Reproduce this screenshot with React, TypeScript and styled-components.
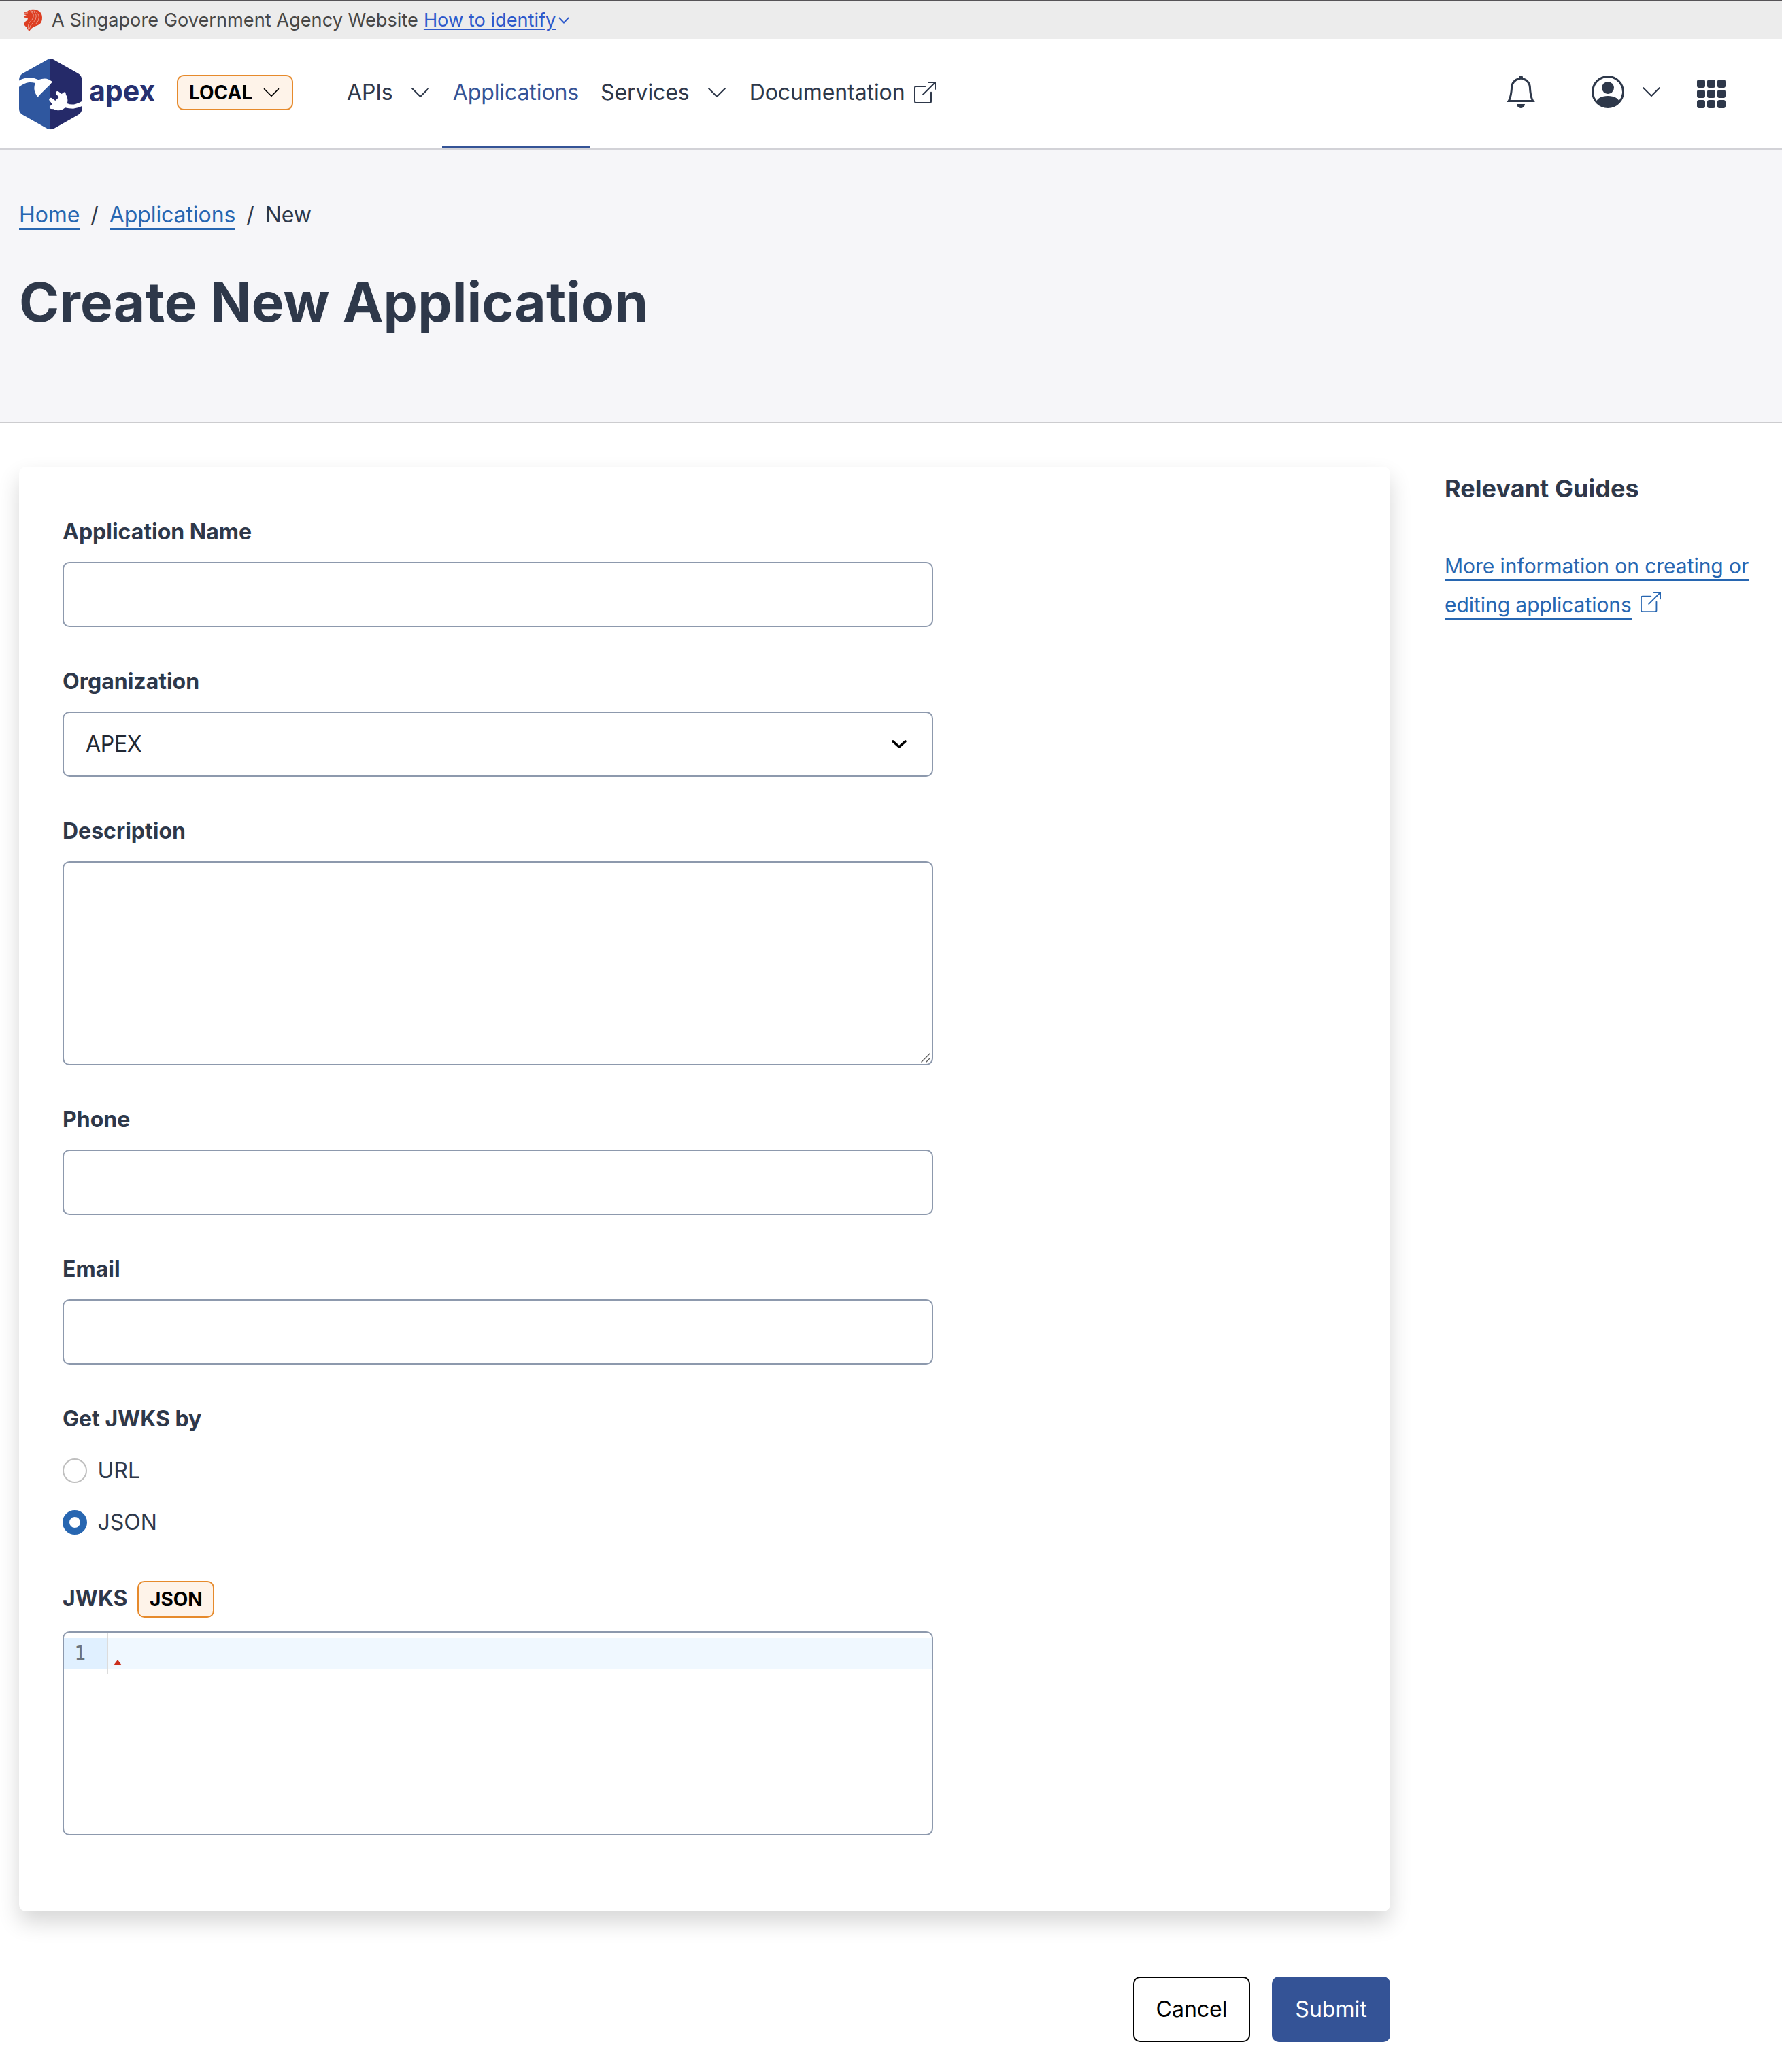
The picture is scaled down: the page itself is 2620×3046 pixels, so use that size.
import React from "react";
import styled, { createGlobalStyle, css } from "styled-components";
import {
  BsBell,
  BsBoxArrowUpRight,
  BsChevronDown,
  BsGrid3X3GapFill,
  BsPersonCircle,
} from "react-icons/bs";

const ink = "#2e384a";
const blue = "#345396";
const linkBlue = "#2766b1";
const line = "#8d99ad";

const GlobalStyle = createGlobalStyle`
  *, *::before, *::after { box-sizing: border-box; }
  body {
    margin: 0;
    background: #ffffff;
    color: ${ink};
    font-family: Inter, "Liberation Sans", sans-serif;
    font-size: 32px;
    line-height: 48px;
  }
  button, input, textarea { font: inherit; color: inherit; }
`;

const Page = styled.div`
  width: 2620px;
  height: 3046px;
  overflow: hidden;
  display: flex;
  flex-direction: column;
`;

/* ---------- masthead ---------- */

const Masthead = styled.div`
  height: 58px;
  flex: none;
  display: flex;
  align-items: center;
  padding-left: 34px;
  border-top: 2px solid #565457;
  background: #ececec;
  color: #474747;
  font-size: 27.2px;
  line-height: 40px;
  white-space: nowrap;
`;

const MastheadText = styled.span`
  margin-left: 12px;
`;

const MastheadLink = styled.a`
  margin-left: 8px;
  display: inline-flex;
  align-items: center;
  color: #2d59cb;
`;

const MastheadLinkText = styled.span`
  text-decoration: underline;
  text-decoration-thickness: 2px;
  text-underline-offset: 3px;
`;

const MastheadChevron = styled.svg`
  width: 18px;
  height: 12px;
  margin-left: 3px;
`;

/* ---------- header ---------- */

const Header = styled.header`
  height: 162px;
  flex: none;
  display: flex;
  align-items: stretch;
  padding: 0 80px 0 28px;
  border-bottom: 2px solid #d2d2d7;
  background: #ffffff;
`;

const Brand = styled.a`
  display: flex;
  align-items: center;
  width: 232px;
`;

const Tag = styled.span<{ $height: number }>`
  display: inline-flex;
  align-items: center;
  height: ${(p) => p.$height}px;
  padding: 0 16px;
  border: 2px solid #e68a2c;
  border-radius: 10px;
  background: #fef3e9;
  color: #000000;
  font-size: 28px;
  font-weight: 700;
  line-height: 42px;
`;

const EnvironmentTag = styled(Tag)`
  align-self: center;
  width: 171px;
  justify-content: space-between;
  margin-bottom: 4px;
`;

const Nav = styled.nav`
  display: flex;
  margin-left: 63px;
  letter-spacing: -0.09px;
`;

const NavItem = styled.a<{ $active?: boolean; $gap?: number }>`
  display: flex;
  align-items: center;
  gap: ${(p) => p.$gap ?? 24}px;
  padding: 0 16px;
  border-bottom: 4px solid transparent;
  color: ${ink};
  ${(p) =>
    p.$active &&
    css`
      color: ${blue};
      border-bottom-color: ${blue};
    `}
  svg {
    display: block;
    flex: none;
  }
`;

const Tools = styled.div`
  display: flex;
  align-items: center;
  margin-left: auto;
  padding-bottom: 6px;
`;

const Account = styled.div`
  display: flex;
  align-items: center;
  gap: 24px;
  margin: 0 48px 0 80px;
`;

const AppsButton = styled.div`
  display: flex;
  padding-top: 6px;
`;

/* ---------- hero ---------- */

const Hero = styled.section`
  height: 402px;
  flex: none;
  padding: 72px 28px 0;
  border-bottom: 2px solid #cccccf;
  background: #f6f6f9;
`;

const Breadcrumb = styled.nav`
  display: flex;
  align-items: center;
  letter-spacing: -0.09px;
`;

const Crumb = styled.span``;

const Slash = styled.span`
  width: 43.5px;
  text-align: center;
`;

const linkLine = css`
  color: ${linkBlue};
  border-bottom: 3px solid ${linkBlue};
`;

const CrumbLink = styled.a`
  ${linkLine}
`;

const Title = styled.h1`
  margin: 56px 0 0;
  font-size: 80px;
  font-weight: 700;
  line-height: 96px;
  letter-spacing: 0.13px;
`;

/* ---------- content ---------- */

const Content = styled.main`
  display: flex;
  align-items: flex-start;
  gap: 80px;
  padding: 64px 28px 0;
`;

const FormColumn = styled.form`
  width: 2016px;
`;

const Card = styled.div`
  display: flex;
  flex-direction: column;
  gap: 56px;
  padding: 72px 64px 112px;
  border-radius: 10px;
  background: #ffffff;
  box-shadow: 0 16px 32px rgba(0, 0, 0, 0.16);
`;

const Field = styled.div`
  display: flex;
  flex-direction: column;
  align-items: flex-start;
  gap: 20px;
`;

const Label = styled.label`
  font-weight: 700;
`;

const box = css`
  display: block;
  width: 1280px;
  margin: 0;
  border: 2px solid ${line};
  border-radius: 10px;
  background: #ffffff;
  outline: none;
`;

const Input = styled.input`
  ${box}
  height: 96px;
  padding: 0 32px;
`;

const Select = styled.div`
  ${box}
  height: 96px;
  display: flex;
  align-items: center;
  justify-content: space-between;
  padding: 0 36px 0 32px;
  color: #212833;
  letter-spacing: -0.3px;
`;

const TextArea = styled.div`
  ${box}
  height: 300px;
  display: flex;
  align-items: flex-end;
  justify-content: flex-end;
  padding: 2px;
`;

const RadioGroup = styled.div`
  display: flex;
  flex-direction: column;
  gap: 28px;
  padding: 8px 0 6px;
`;

const RadioRow = styled.label`
  display: flex;
  align-items: center;
  gap: 15.5px;
`;

const RadioDot = styled.span<{ $checked?: boolean }>`
  width: 36px;
  height: 36px;
  border-radius: 50%;
  background: #ffffff;
  border: ${(p) => (p.$checked ? `10px solid ${linkBlue}` : "2px solid #bfbfbf")};
`;

const TaggedLabel = styled.div`
  display: flex;
  align-items: baseline;
  gap: 14.5px;
`;

const FormatTag = styled(Tag)`
  width: 113px;
`;

const Editor = styled.div`
  ${box}
  height: 300px;
  overflow: hidden;
  font-family: "DejaVu Sans Mono", monospace;
  font-size: 28px;
  line-height: 45px;
`;

const EditorRow = styled.div`
  display: flex;
  height: 61px;
`;

const Gutter = styled.div`
  width: 65px;
  padding: 8px 0;
  border-right: 2px solid #dcdcdc;
`;

const LineNumber = styled.div`
  height: 45px;
  padding-right: 31px;
  background: #e0f0ff;
  color: #6a737d;
  text-align: right;
`;

const ActiveLine = styled.div`
  flex: 1;
  height: 45px;
  margin-top: 8px;
  padding: 32px 0 0 8px;
  background: #f0f8ff;
`;

const LintMark = styled.div`
  width: 0;
  height: 0;
  border: solid transparent;
  border-width: 0 6px 8px;
  border-bottom-color: #cb2f1c;
`;

const Actions = styled.div`
  display: flex;
  justify-content: flex-end;
  gap: 32px;
  margin-top: 96px;
`;

const Button = styled.button<{ $primary?: boolean }>`
  height: 96px;
  width: ${(p) => (p.$primary ? 174 : 172)}px;
  padding: 0;
  border: 2px solid ${(p) => (p.$primary ? blue : "#000000")};
  border-radius: 10px;
  background: ${(p) => (p.$primary ? blue : "#ffffff")};
  color: ${(p) => (p.$primary ? "#ffffff" : "#000000")};
`;

/* ---------- guides ---------- */

const Guides = styled.aside`
  width: 468px;
`;

const GuidesTitle = styled.h2`
  margin: 8px 0 0;
  font-size: 36px;
  font-weight: 700;
  line-height: 48px;
  letter-spacing: 0.05px;
`;

const GuideText = styled.p`
  margin: 62px 0 0;
  font-size: 30px;
  line-height: 57px;
  letter-spacing: -0.05px;
  white-space: nowrap;
`;

const GuideLink = styled.a`
  ${linkLine}
  padding-bottom: 1px;
`;

const GuideIcon = styled(BsBoxArrowUpRight)`
  margin-left: 13px;
  color: ${linkBlue};
`;

/* ---------- drawings ---------- */

const Lion = () => (
  <svg width="30" height="34" viewBox="102 40 90 102">
    <path
      fill="#dd3e22"
      d="M106 55 L119 52 Q130 41 147 42 Q166 43 176 53 Q186 64 186 78 Q186 96 177 106 Q168 114 152 118 Q138 124 129 139 Q119 131 118 120 Q110 117 108 112 Q105 103 111 97 L120 90 Q124 84 122 80 L108 78 L104 72 L117 68 L105 65 Z"
    />
    <g fill="none" stroke="#f3cfc8" strokeWidth="1.9" strokeLinecap="round">
      <path d="M121 54 Q142 49 147 64 Q151 80 134 96 Q119 110 126 133" />
      <path d="M134 48 Q158 52 160 72 Q160 90 144 103 Q133 112 130 127" />
      <path d="M150 49 Q171 58 172 77 Q172 93 160 105" />
      <path d="M106 59 L122 58" />
    </g>
  </svg>
);

const Logo = () => (
  <svg width="216" height="105" viewBox="84 257 648 315">
    <defs>
      <clipPath id="hex">
        <path d="M223 258 Q231 258 238 262 L345 323 Q361 333 361 351 V478 Q361 496 345 505 L238 566 Q231 570 223 570 Q215 570 208 566 L100 505 Q84 496 84 478 V351 Q84 333 100 323 L208 262 Q215 258 223 258 Z" />
      </clipPath>
    </defs>
    <g clipPath="url(#hex)">
      <rect x="84" y="258" width="139" height="313" fill="#2f579f" />
      <rect x="222" y="258" width="140" height="313" fill="#252a69" />
      <path
        fill="#ffffff"
        d="M80 357 Q104 342 130 342 Q152 342 170 351 Q190 343 206 346 Q217 349 231 359 Q227 366 218 375 L180 412 Q173 419 167 427 Q151 408 151 388 Q151 376 156 365 Q142 361 128 362 Q104 366 80 385 Z"
      />
      <path
        fill="#ffffff"
        d="M247 404 Q253 399 259 403 L272 413 L281 406 Q286 403 289 407 Q290 416 295 425 Q301 440 296 455 Q315 463 335 457 Q350 453 364 444 V466 Q345 477 323 478 Q302 478 287 474 Q273 487 255 486 Q243 485 236 480 L224 479 Q217 475 218 470 L230 458 L217 441 Q215 434 221 431 Q227 429 231 433 L244 443 L260 427 L247 413 Q244 408 247 404 Z"
      />
    </g>
    <text
      x="393"
      y="447"
      fontFamily="Inter, sans-serif"
      fontWeight="700"
      fontSize="134"
      textLength="292"
      lengthAdjust="spacingAndGlyphs"
      fill="#28306f"
    >
      apex
    </text>
  </svg>
);

const SelectChevron = () => (
  <svg width="24" height="16" viewBox="0 0 24 16">
    <path
      d="M3 4 L12 12 L21 4"
      fill="none"
      stroke="#000000"
      strokeWidth="3.6"
      strokeLinecap="round"
      strokeLinejoin="round"
    />
  </svg>
);

const ResizeGrip = () => (
  <svg width="14" height="14" viewBox="0 0 14 14">
    <path d="M0.5 13.5 L13.5 0.5 M7.5 13.5 L13.5 7.5" stroke="#5c5c5c" strokeWidth="1.4" />
  </svg>
);

export default function App() {
  return (
    <Page>
      <GlobalStyle />
      <Masthead>
        <Lion />
        <MastheadText>A Singapore Government Agency Website</MastheadText>
        <MastheadLink>
          <MastheadLinkText>How to identify</MastheadLinkText>
          <MastheadChevron viewBox="0 0 18 12">
            <path d="M2 2 L9 9.5 L16 2" fill="none" stroke="currentColor" strokeWidth="2" />
          </MastheadChevron>
        </MastheadLink>
      </Masthead>

      <Header>
        <Brand>
          <Logo />
        </Brand>
        <EnvironmentTag $height={52}>
          <span>LOCAL</span>
          <BsChevronDown size={28} />
        </EnvironmentTag>
        <Nav>
          <NavItem>
            <span>APIs</span>
            <BsChevronDown size={32} />
          </NavItem>
          <NavItem $active>
            <span>Applications</span>
          </NavItem>
          <NavItem>
            <span>Services</span>
            <BsChevronDown size={32} />
          </NavItem>
          <NavItem $gap={13}>
            <span>Documentation</span>
            <BsBoxArrowUpRight size={32} />
          </NavItem>
        </Nav>
        <Tools>
          <BsBell size={48} color={ink} />
          <Account>
            <BsPersonCircle size={48} color={ink} />
            <BsChevronDown size={32} color={ink} />
          </Account>
          <AppsButton>
            <BsGrid3X3GapFill size={48} color={ink} />
          </AppsButton>
        </Tools>
      </Header>

      <Hero>
        <Breadcrumb>
          <Crumb>
            <CrumbLink>Home</CrumbLink>
          </Crumb>
          <Slash>/</Slash>
          <Crumb>
            <CrumbLink>Applications</CrumbLink>
          </Crumb>
          <Slash>/</Slash>
          <Crumb>New</Crumb>
        </Breadcrumb>
        <Title>Create New Application</Title>
      </Hero>

      <Content>
        <FormColumn>
          <Card>
            <Field>
              <Label>Application Name</Label>
              <Input />
            </Field>
            <Field>
              <Label>Organization</Label>
              <Select>
                <span>APEX</span>
                <SelectChevron />
              </Select>
            </Field>
            <Field>
              <Label>Description</Label>
              <TextArea>
                <ResizeGrip />
              </TextArea>
            </Field>
            <Field>
              <Label>Phone</Label>
              <Input />
            </Field>
            <Field>
              <Label>Email</Label>
              <Input />
            </Field>
            <Field>
              <Label>Get JWKS by</Label>
              <RadioGroup>
                <RadioRow>
                  <RadioDot />
                  <span>URL</span>
                </RadioRow>
                <RadioRow>
                  <RadioDot $checked />
                  <span>JSON</span>
                </RadioRow>
              </RadioGroup>
            </Field>
            <Field>
              <TaggedLabel>
                <Label>JWKS</Label>
                <FormatTag $height={54}>JSON</FormatTag>
              </TaggedLabel>
              <Editor>
                <EditorRow>
                  <Gutter>
                    <LineNumber>1</LineNumber>
                  </Gutter>
                  <ActiveLine>
                    <LintMark />
                  </ActiveLine>
                </EditorRow>
              </Editor>
            </Field>
          </Card>
          <Actions>
            <Button type="button">Cancel</Button>
            <Button type="button" $primary>
              Submit
            </Button>
          </Actions>
        </FormColumn>

        <Guides>
          <GuidesTitle>Relevant Guides</GuidesTitle>
          <GuideText>
            <GuideLink>
              More information on creating or
              <br />
              editing applications
            </GuideLink>
            <GuideIcon size={30} />
          </GuideText>
        </Guides>
      </Content>
    </Page>
  );
}
